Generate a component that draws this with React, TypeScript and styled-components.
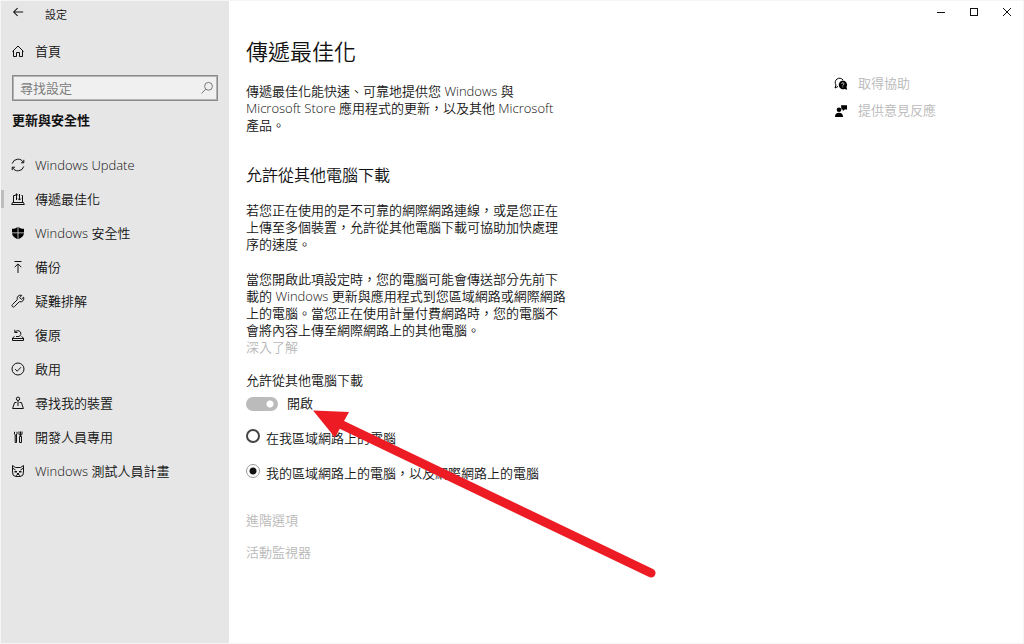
import React from "react";
import styled, { createGlobalStyle } from "styled-components";

const GlobalStyle = createGlobalStyle`
  *, *::before, *::after { box-sizing: border-box; }
  body {
    margin: 0;
    background: #fff;
    color: #111;
    font-family: "Open Sans", "Noto Sans CJK TC", sans-serif;
    font-size: 13px;
    font-weight: 350;
    line-height: 17px;
  }
  button, input { font: inherit; color: inherit; }
  h1, h2, p, ul { margin: 0; padding: 0; }
  h1, h2 { font-weight: 350; }
`;

const Window = styled.div`
  position: relative;
  display: flex;
  min-height: 100vh;
  border: 1px solid #f5f5f5;
`;

const Sidebar = styled.aside`
  flex: 0 0 228px;
  background: #e6e6e6;
`;

const TitleRow = styled.div`
  display: flex;
  height: 28px;
  gap: 21px;
  padding-left: 11px;
  font-size: 11px;
`;

const BackButton = styled.button`
  display: flex;
  align-items: center;
  justify-content: center;
  width: 12px;
  height: 22px;
  padding: 0;
  border: 0;
  background: none;
`;

const WindowTitle = styled.span`
  padding-top: 5px;
`;

const NavLink = styled.a<{ $active?: boolean }>`
  display: flex;
  align-items: center;
  gap: 10px;
  height: 34px;
  padding-left: 7px;
  border-left: 3px solid ${(p) => (p.$active ? "#bdbdbd" : "transparent")};
  border-image: ${(p) =>
    p.$active
      ? "linear-gradient(transparent 25%, #bdbdbd 25%, #bdbdbd 75%, transparent 75%) 1"
      : "none"};
  color: inherit;
  text-decoration: none;
  white-space: nowrap;
`;

const HomeLink = styled(NavLink)`
  height: 44px;
`;

const SearchBox = styled.label`
  display: flex;
  align-items: center;
  height: 26px;
  margin: 2px 11px 0;
  padding: 0 3px 0 7px;
  border: 1px solid #8a8a8a;
  outline: 1px solid #b4b4b4;
  outline-offset: -2px;
  background: #f0f0f0;
  color: #777;
`;

const SearchInput = styled.input`
  flex: 1;
  min-width: 0;
  padding: 0;
  border: 0;
  outline: 0;
  background: none;
  &::placeholder { color: #777; opacity: 1; }
`;

const SectionTitle = styled.h2`
  padding: 11px 11px 0;
  font-size: 13px;
  font-weight: 700;
`;

const NavList = styled.ul`
  padding-top: 19px;
  list-style: none;
`;

const Main = styled.main`
  flex: 1;
  min-width: 0;
`;

const Controls = styled.div`
  display: flex;
  justify-content: flex-end;
`;

const ControlButton = styled.button`
  display: flex;
  align-items: center;
  justify-content: center;
  width: 33px;
  height: 22px;
  padding: 0;
  border: 0;
  background: none;
`;

const Page = styled.div`
  display: grid;
  grid-template-columns: minmax(0, 1fr) 189px;
  padding: 14px 0 24px 17px;
`;

const Content = styled.div`
  max-width: 330px;
`;

const Title = styled.h1`
  font-size: 22px;
  line-height: 28px;
`;

const Subtitle = styled.h2`
  margin-top: 30px;
  font-size: 16px;
  line-height: 22px;
`;

const Paragraph = styled.p<{ $gap: number }>`
  margin-top: ${(p) => p.$gap}px;
  white-space: nowrap;
`;

const MutedLink = styled.a`
  display: block;
  width: max-content;
  color: #b8b8b8;
  text-decoration: none;
`;

const Links = styled.div`
  display: grid;
  gap: 15px;
  margin-top: 30px;
`;

const ToggleRow = styled.label`
  display: flex;
  align-items: center;
  gap: 9px;
  margin-top: 6px;
`;

const Toggle = styled.input`
  appearance: none;
  width: 32px;
  height: 14px;
  margin: 0;
  border-radius: 7px;
  background: radial-gradient(circle at 24px 7px, #fff 3px, #bbb 4px);
`;

const RadioGroup = styled.div`
  display: grid;
  gap: 17px;
  margin-top: 17px;
`;

const RadioLabel = styled.label`
  display: flex;
  align-items: flex-start;
  gap: 6px;
  white-space: nowrap;
`;

const Radio = styled.input`
  appearance: none;
  width: 14px;
  height: 14px;
  margin: 0;
  border: 2px solid #444;
  border-radius: 50%;
  &:checked {
    border: 1px solid #999;
    background: radial-gradient(circle, #111 3px, transparent 4px);
  }
`;

const RadioText = styled.span`
  padding-top: 1px;
`;

const HelpColumn = styled.aside`
  display: flex;
  flex-direction: column;
  gap: 10px;
  padding-top: 38px;
`;

const HelpLink = styled.a`
  display: flex;
  align-items: center;
  gap: 10px;
  color: #b8b8b8;
  text-decoration: none;
  svg { color: #000; }
`;

const Arrow = styled.svg`
  position: absolute;
  left: 311px;
  top: 407px;
  pointer-events: none;
`;

function Icon({ size = 14, children }: { size?: number; children: React.ReactNode }) {
  return (
    <svg
      width={size}
      height={size}
      viewBox="0 0 14 14"
      fill="none"
      stroke="currentColor"
      strokeWidth="1"
      aria-hidden="true"
    >
      {children}
    </svg>
  );
}

const navItems = [
  {
    label: "Windows Update",
    icon: <path d="M1.200 5.600A6 6 0 0 1 12.400 4.600M12.800 1.800v3H10M12.800 8.400A6 6 0 0 1 1.600 9.400M1.200 12.200v-3H4" />,
  },
  {
    label: "傳遞最佳化",
    active: true,
    icon: <path d="M4.500 3.500h-2v7M11.500 10.500v-7h-1M1.500 10.500h11l.8 2H.7zM5.500 8V1.500M4 3.500l1.500-1.600L7 3.500M8.500 2v6M7 6.500l1.500 1.600L10 6.500" />,
  },
  {
    label: "Windows 安全性",
    icon: (
      <path
        fill="#000"
        stroke="none"
        d="M6.600 1v5.500H1V2.800C3.400 2.800 5 2.300 6.600 1zM7.400 1C9 2.300 10.600 2.800 13 2.800v3.700H7.400zM1 7.300h5.600v6C3.500 11.900 1.300 10 1 7.300zM7.400 7.300H13c-.3 2.700-2.500 4.600-5.600 6z"
      />
    ),
  },
  { label: "備份", icon: <path d="M3.500 1.500h7M7 13V4M3.700 7.200L7 3.900l3.300 3.300" /> },
  {
    label: "疑難排解",
    icon: <path d="M12.600 3.200l-2.300 2.200-1.700-1.700 2.200-2.300a3.400 3.400 0 0 0-4.500 4.300L1.400 10.600a1.400 1.400 0 0 0 2 2l4.900-4.900a3.400 3.400 0 0 0 4.300-4.500z" />,
  },
  {
    label: "復原",
    icon: <path d="M3.500 8.500L1.500 10v2.500h11V10l-2-1.500M1.500 10.500h11M4.200 4.300a3 3 0 1 1 3.600 4.200H5M3.800 1.800v2.700h2.700" />,
  },
  {
    label: "啟用",
    icon: (
      <>
        <circle cx="7" cy="7" r="6" />
        <path d="M4.200 7.200l2 2 3.800-4" />
      </>
    ),
  },
  {
    label: "尋找我的裝置",
    icon: (
      <>
        <circle cx="7" cy="2.800" r="1.700" />
        <path d="M7 4.500v5.500M5.500 6.500H3.600l-2 6h10.800l-2-6H8.500" />
      </>
    ),
  },
  {
    label: "開發人員專用",
    icon: (
      <path d="M3.500 1.800v2.400l1.200 1 1.300-1V1.800M4.200 5v7.500h1.300V5M8 1.500v3l1.500 1 1.500-1v-3M9.500 1.500v5M8.500 6.500h2v6h-2z" />
    ),
  },
  {
    label: "Windows 測試人員計畫",
    icon: (
      <>
        <path d="M1.500 1.500l3 2h5l3-2v5.500L12 11 9.500 12.500h-5L2 11 1.500 7zM1.500 4l3 2M12.500 4l-3 2M4.500 12l2.500-2 2.500 2M6 9.500h2" />
        <path d="M3.500 7.700h2.500M8 7.700h2.500" strokeWidth="1.400" />
      </>
    ),
  },
];

export default function App() {
  return (
    <Window lang="zh-Hant">
      <GlobalStyle />
      <Sidebar>
        <TitleRow>
          <BackButton aria-label="上一頁">
            <Icon size={12}>
              <path d="M13 7H2M6.500 2.500L2 7l4.500 4.500" strokeWidth="1.200" />
            </Icon>
          </BackButton>
          <WindowTitle>設定</WindowTitle>
        </TitleRow>
        <HomeLink href="#home">
          <Icon>
            <path d="M1.500 7.500L7 2l5.500 5.500M2.500 6.500v6h3v-4h3v4h3v-6" />
          </Icon>
          首頁
        </HomeLink>
        <SearchBox>
          <SearchInput type="text" placeholder="尋找設定" aria-label="尋找設定" />
          <Icon>
            <circle cx="8.500" cy="5.300" r="3.900" />
            <path d="M5.700 8.200L1.500 12.500" />
          </Icon>
        </SearchBox>
        <SectionTitle>更新與安全性</SectionTitle>
        <nav>
          <NavList>
            {navItems.map((item) => (
              <li key={item.label}>
                <NavLink href="#" $active={item.active}>
                  <Icon>{item.icon}</Icon>
                  {item.label}
                </NavLink>
              </li>
            ))}
          </NavList>
        </nav>
      </Sidebar>
      <Main>
        <Controls>
          <ControlButton aria-label="最小化">
            <Icon>
              <path d="M3 7.500h8" />
            </Icon>
          </ControlButton>
          <ControlButton aria-label="最大化">
            <Icon>
              <rect x="3.500" y="3.500" width="7" height="7" />
            </Icon>
          </ControlButton>
          <ControlButton aria-label="關閉">
            <Icon>
              <path d="M3 3l8 8M11 3l-8 8" />
            </Icon>
          </ControlButton>
        </Controls>
        <Page>
          <Content>
            <Title>傳遞最佳化</Title>
            <Paragraph $gap={18}>
              傳遞最佳化能快速、可靠地提供您 Windows 與
              <br />
              Microsoft Store 應用程式的更新，以及其他 Microsoft
              <br />
              產品。
            </Paragraph>
            <Subtitle>允許從其他電腦下載</Subtitle>
            <Paragraph $gap={16}>
              若您正在使用的是不可靠的網際網路連線，或是您正在
              <br />
              上傳至多個裝置，允許從其他電腦下載可協助加快處理
              <br />
              序的速度。
            </Paragraph>
            <Paragraph $gap={18}>
              當您開啟此項設定時，您的電腦可能會傳送部分先前下
              <br />
              載的 Windows 更新與應用程式到您區域網路或網際網路
              <br />
              上的電腦。當您正在使用計量付費網路時，您的電腦不
              <br />
              會將內容上傳至網際網路上的其他電腦。
            </Paragraph>
            <MutedLink href="#learn">深入了解</MutedLink>
            <Paragraph $gap={16} id="allow-label">
              允許從其他電腦下載
            </Paragraph>
            <ToggleRow>
              <Toggle type="checkbox" role="switch" defaultChecked aria-describedby="allow-label" />
              開啟
            </ToggleRow>
            <RadioGroup role="radiogroup" aria-labelledby="allow-label">
              <RadioLabel>
                <Radio type="radio" name="source" />
                <RadioText>在我區域網路上的電腦</RadioText>
              </RadioLabel>
              <RadioLabel>
                <Radio type="radio" name="source" defaultChecked />
                <RadioText>我的區域網路上的電腦，以及網際網路上的電腦</RadioText>
              </RadioLabel>
            </RadioGroup>
            <Links>
              <MutedLink href="#advanced">進階選項</MutedLink>
              <MutedLink href="#monitor">活動監視器</MutedLink>
            </Links>
          </Content>
          <HelpColumn>
            <HelpLink href="#help">
              <Icon>
                <path d="M4 9.500L1 11l1-3A4 4 0 1 1 9 3" />
                <path
                  d="M8.800 3.600a4.300 4.300 0 0 1 3.700 6.500l.7 2.700-2.600-.9A4.300 4.300 0 1 1 8.800 3.600z"
                  fill="currentColor"
                  stroke="none"
                />
                <path d="M7.700 6.800a1.100 1.100 0 1 1 1.600 1c-.4.200-.5.400-.5.900M8.800 9.500v.9" stroke="#fff" strokeWidth=".8" />
              </Icon>
              取得協助
            </HelpLink>
            <HelpLink href="#feedback">
              <Icon>
                <g fill="currentColor" stroke="none">
                  <circle cx="5" cy="5.800" r="2.300" />
                  <path d="M1 13c0-3 1.500-4.300 4-4.300S9 10 9 13zM7 1.200h6v4.300h-2.500L8.800 7.300V5.500H7.500z" />
                </g>
              </Icon>
              提供意見反應
            </HelpLink>
          </HelpColumn>
        </Page>
      </Main>
      <Arrow width="350" height="180" viewBox="312 408 350 180" aria-hidden="true">
        <path d="M338 423L651 573" stroke="#ed1c24" strokeWidth="9" strokeLinecap="round" />
        <path d="M313 410.500L349 412L335 437.500z" fill="#ed1c24" />
      </Arrow>
    </Window>
  );
}
